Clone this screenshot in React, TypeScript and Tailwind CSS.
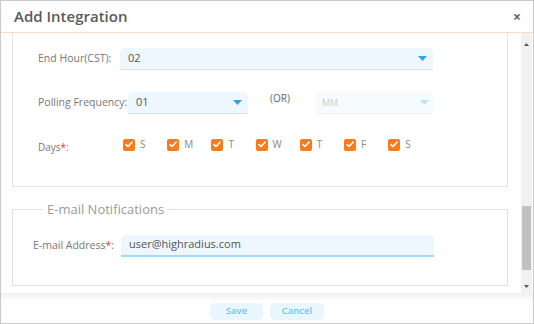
import React from "react";

const days = ["S", "M", "T", "W", "T", "F", "S"];

function Caret({ faded }: { faded?: boolean }) {
  return (
    <svg width="9" height="5" viewBox="0 0 9 5">
      <path d="M0 0 L9 0 L4.5 5 Z" fill={faded ? "#bfe3f6" : "#2aa6e6"} />
    </svg>
  );
}

function Check() {
  return (
    <span className="flex h-[12px] w-[12px] items-center justify-center rounded-[2px] bg-[#fb7a1a]">
      <svg width="8" height="7" viewBox="0 0 8 7">
        <path d="M1 3.6 L3 5.5 L7 1.2" stroke="#fff" strokeWidth="1.6" fill="none" strokeLinecap="round" strokeLinejoin="round" />
      </svg>
    </span>
  );
}

export default function App() {
  return (
    <div className="flex h-[324px] w-[534px] flex-col border border-[#c9c9c9] bg-white text-[#777] [font-family:'Open_Sans',sans-serif]">
      {/* header */}
      <div className="flex h-[32px] shrink-0 items-center justify-between border-b border-[#fcdcc2] pl-[13px] pr-[12px]">
        <span className="text-[15px] font-semibold text-[#5a5a5a]">Add Integration</span>
        <span className="text-[14px] font-bold text-[#666]">×</span>
      </div>

      {/* body */}
      <div className="flex h-[260px] shrink-0">
        <div className="flex-1 overflow-hidden pl-[11px] pr-[13px]">
          <div className="-mt-[20px] h-[174px] border border-[#e4e4e4] pl-[25px] pt-[34px]">
            <div className="flex items-center">
              <span className="w-[82px] whitespace-nowrap text-[10.5px]">End Hour(CST):</span>
              <div className="flex h-[22px] w-[313px] items-center justify-between rounded-t-[5px] border-b border-[#f8dcc4] bg-[#eef7fd] pl-[8px] pr-[6px]">
                <span className="text-[11px] text-[#555]">02</span>
                <Caret />
              </div>
            </div>
            <div className="mt-[22px] flex items-center">
              <span className="w-[90px] whitespace-nowrap text-[10.5px]">Polling Frequency:</span>
              <div className="flex h-[22px] w-[120px] items-center justify-between rounded-t-[5px] border-b border-[#f8dcc4] bg-[#eef7fd] pl-[8px] pr-[6px]">
                <span className="text-[11px] text-[#555]">01</span>
                <Caret />
              </div>
              <span className="ml-[22px] -mt-[10px] w-[46px] text-[10px] text-[#666]">(OR)</span>
              <div className="flex h-[22px] w-[117px] items-center justify-between border-b border-[#fbeee3] bg-[#f6fbfe] pl-[6px] pr-[4px]">
                <span className="text-[9px] text-[#ccc]">MM</span>
                <Caret faded />
              </div>
            </div>
            <div className="mt-[23px] flex items-start">
              <span className="mt-[3px] w-[85px] text-[10px]">
                Days<span className="text-[#e53935]">*</span>:
              </span>
              <div className="flex">
                {days.map((d, i) => (
                  <div key={i} className="flex w-[44.2px] items-center gap-[5px]">
                    <Check />
                    <span className="text-[10px] text-[#888]">{d}</span>
                  </div>
                ))}
              </div>
            </div>
          </div>

          <fieldset className="mt-[13px] h-[86px] border border-[#e0e0e0] pl-[20px]">
            <legend className="ml-[10px] px-[4px] text-[13px] text-[#9a9a9a]">E-mail Notifications</legend>
            <div className="mt-[15px] flex items-center">
              <span className="w-[88px] whitespace-nowrap text-[10.5px] text-[#777]">
                E-mail Address<span className="text-[#e53935]">*</span>:
              </span>
              <div className="flex h-[22px] w-[313px] items-center rounded-t-[5px] border-b-2 border-[#9fdcf6] bg-[#eef7fd] pl-[8px]">
                <span className="text-[11px] text-[#555]">user@highradius.com</span>
              </div>
            </div>
          </fieldset>
        </div>

        {/* scrollbar */}
        <div className="mr-[1px] flex w-[11px] flex-col items-center bg-[#f1f1f1]">
          <svg className="mt-[10px]" width="5" height="3" viewBox="0 0 5 3">
            <path d="M0 3 L5 3 L2.5 0 Z" fill="#555" />
          </svg>
          <div className="mt-[160px] h-[64px] w-[9px] bg-[#c1c1c1]" />
          <svg className="mt-[15px]" width="5" height="3" viewBox="0 0 5 3">
            <path d="M0 0 L5 0 L2.5 3 Z" fill="#555" />
          </svg>
        </div>
      </div>

      {/* footer */}
      <div className="flex flex-1 items-start justify-center gap-[7px] bg-gradient-to-b from-[#f0f0f0] to-white to-[30%] pt-[10px]">
        <button className="h-[17px] w-[53px] rounded-[5px] bg-[#eaf6fd] text-[9.5px] font-semibold text-[#6cc6f0]">Save</button>
        <button className="h-[17px] w-[54px] rounded-[5px] bg-[#eaf6fd] text-[9.5px] font-semibold text-[#6cc6f0]">Cancel</button>
      </div>
    </div>
  );
}
